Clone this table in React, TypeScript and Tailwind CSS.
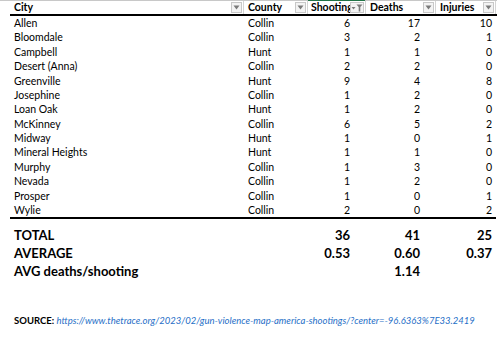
import React from "react";

const rows: [string, string, number, number, number][] = [
  ["Allen", "Collin", 6, 17, 10],
  ["Bloomdale", "Collin", 3, 2, 1],
  ["Campbell", "Hunt", 1, 1, 0],
  ["Desert (Anna)", "Collin", 2, 2, 0],
  ["Greenville", "Hunt", 9, 4, 8],
  ["Josephine", "Collin", 1, 2, 0],
  ["Loan Oak", "Hunt", 1, 2, 0],
  ["McKinney", "Collin", 6, 5, 2],
  ["Midway", "Hunt", 1, 0, 1],
  ["Mineral Heights", "Hunt", 1, 1, 0],
  ["Murphy", "Collin", 1, 3, 0],
  ["Nevada", "Collin", 1, 2, 0],
  ["Prosper", "Collin", 1, 0, 1],
  ["Wylie", "Collin", 2, 0, 2],
];

function Drop() {
  return (
    <div className="w-[11px] h-[11px] border border-[#c8c8c8] bg-[#f3f3f3] flex items-center justify-center shrink-0">
      <svg width="7" height="5" viewBox="0 0 7 5">
        <path d="M0.5 0.5 L6.5 0.5 L3.5 4.5 Z" fill="#7a7a7a" />
      </svg>
    </div>
  );
}

function FilterDrop() {
  return (
    <div className="w-[14px] h-[11px] border border-[#c8c8c8] bg-[#f3f3f3] flex items-center justify-center shrink-0 gap-[1px]">
      <svg width="12" height="8" viewBox="0 0 12 8">
        <path d="M0.5 3 L4.5 3 L2.5 5.5 Z" fill="#7a7a7a" />
        <path d="M5.5 0.5 L11.5 0.5 L9.3 3 L9.3 7.5 L7.7 7.5 L7.7 3 Z" fill="#7a7a7a" />
      </svg>
    </div>
  );
}

export default function App() {
  const font = { fontFamily: "Lato, 'Open Sans', sans-serif" };
  return (
    <div className="w-[504px] h-[354px] bg-white text-black overflow-hidden" style={font}>
      <div className="border-t border-[#c8c8c8] w-[497px]">
        <div className="pl-[10px]">
          <div className="grid grid-cols-[234px_64px_58px_70px_60px] h-[15px] border-b-2 border-black text-[10.5px] font-bold leading-none">
            <div className="flex items-center justify-between pl-[4px] pr-[1px] border-r border-[#d4d4d4]">
              <span>City</span>
              <Drop />
            </div>
            <div className="flex items-center justify-between pl-[4px] pr-[1px] border-r border-[#d4d4d4]">
              <span>County</span>
              <Drop />
            </div>
            <div className="relative flex items-center pl-[3px] pr-[1px] border-r border-[#d4d4d4]">
              <div className="absolute left-0 right-0 top-[-1px] h-[1px] bg-[#217346]" />
              <span className="whitespace-nowrap w-[40px] overflow-hidden">Shooting</span>
              <FilterDrop />
            </div>
            <div className="flex items-center justify-between pl-[4px] pr-[1px] border-r border-[#d4d4d4]">
              <span>Deaths</span>
              <Drop />
            </div>
            <div className="flex items-center justify-between pl-[4px] pr-[1px] border-r border-[#d4d4d4]">
              <span>Injuries</span>
              <Drop />
            </div>
          </div>
          <div className="border-b-2 border-black w-[486px]">
            {rows.map((r) => (
              <div key={r[0]} className="grid grid-cols-[234px_64px_58px_70px_60px] h-[14.4px] items-center text-[10.5px] leading-none">
                <div className="pl-[4px]">{r[0]}</div>
                <div className="pl-[4px]">{r[1]}</div>
                <div className="text-right pr-[16px]">{r[2]}</div>
                <div className="text-right pr-[16px]">{r[3]}</div>
                <div className="text-right pr-[4px]">{r[4]}</div>
              </div>
            ))}
          </div>
          <div className="pt-[7px] text-[13px] font-bold leading-none">
            <div className="grid grid-cols-[234px_64px_58px_70px_60px] h-[18px] items-center">
              <div className="pl-[4px]">TOTAL</div>
              <div />
              <div className="text-right pr-[16px]">36</div>
              <div className="text-right pr-[16px]">41</div>
              <div className="text-right pr-[4px]">25</div>
            </div>
            <div className="grid grid-cols-[234px_64px_58px_70px_60px] h-[18px] items-center">
              <div className="pl-[4px]">AVERAGE</div>
              <div />
              <div className="text-right pr-[16px]">0.53</div>
              <div className="text-right pr-[16px]">0.60</div>
              <div className="text-right pr-[4px]">0.37</div>
            </div>
            <div className="grid grid-cols-[234px_64px_58px_70px_60px] h-[18px] items-center">
              <div className="pl-[4px] whitespace-nowrap">AVG deaths/shooting</div>
              <div />
              <div />
              <div className="text-right pr-[16px]">1.14</div>
              <div />
            </div>
          </div>
          <div className="mt-[36px] pl-[4px] text-[9.5px] leading-none whitespace-nowrap">
            <span className="font-bold">SOURCE: </span>
            <span className="italic text-[#1f6fc7]">https://www.thetrace.org/2023/02/gun-violence-map-america-shootings/?center=-96.6363%7E33.2419</span>
          </div>
        </div>
      </div>
    </div>
  );
}
